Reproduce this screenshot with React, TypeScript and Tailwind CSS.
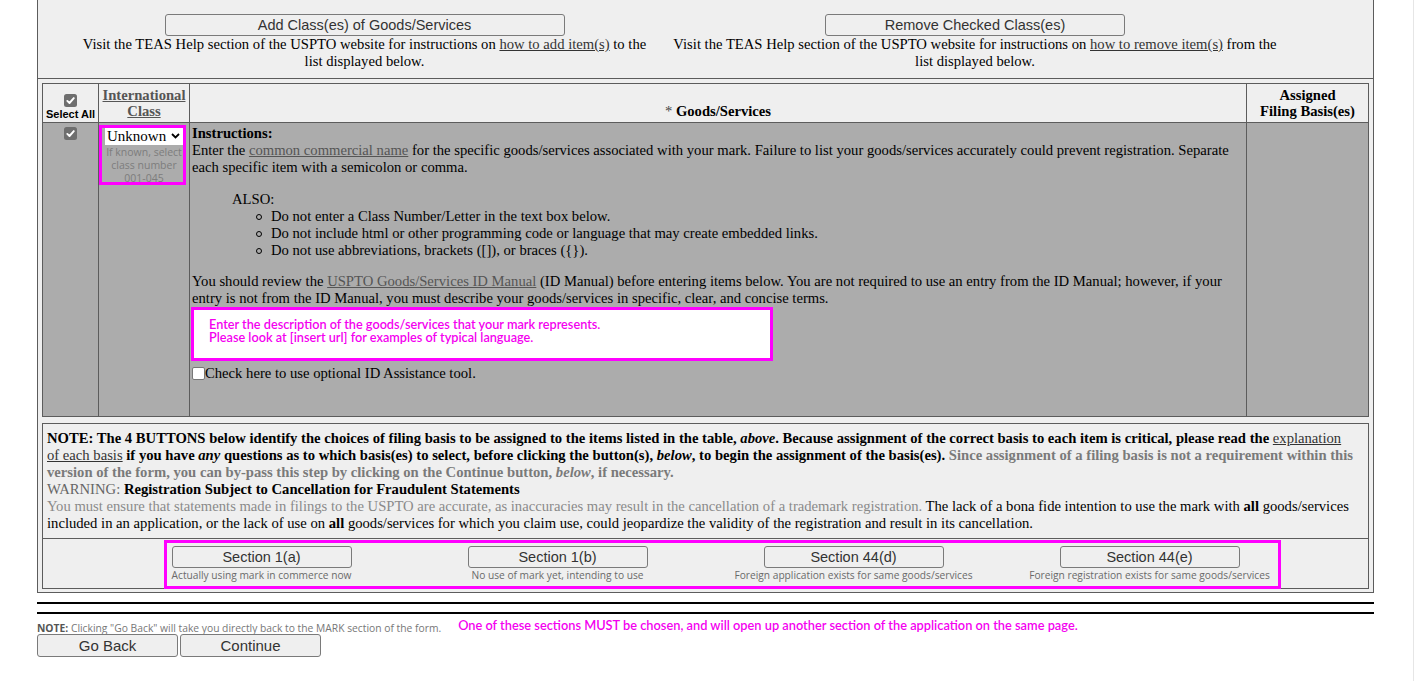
import React from "react";

function DarkCheck() {
  return (
    <svg width="13" height="13" viewBox="0 0 13 13" className="block">
      <rect x="0" y="0" width="13" height="13" rx="2.5" fill="#6e6e6e" />
      <path d="M3.3 6.9 L5.5 9 L9.8 4.1" stroke="#fff" strokeWidth="1.9" fill="none" strokeLinecap="round" strokeLinejoin="round" />
    </svg>
  );
}

function Btn({ className = "", children }: { className?: string; children: React.ReactNode }) {
  return (
    <button
      className={
        "flex items-center justify-center bg-[#efefef] border border-[#7a7a7a] rounded-[3px] text-[#333] font-['Liberation_Sans',Arial,sans-serif] text-[14.5px] leading-none " +
        className
      }
    >
      {children}
    </button>
  );
}

function Circle() {
  return <span className="inline-block w-[6px] h-[6px] rounded-full border border-black mr-[9px] shrink-0" />;
}

const sections = [
  { t: "Section 1(a)", d: "Actually using mark in commerce now" },
  { t: "Section 1(b)", d: "No use of mark yet, intending to use" },
  { t: "Section 44(d)", d: "Foreign application exists for same goods/services" },
  { t: "Section 44(e)", d: "Foreign registration exists for same goods/services" },
];

export default function App() {
  return (
    <div className="relative w-[1414px] h-[681px] overflow-hidden bg-white border-r border-[#e6e6e6] font-['Liberation_Serif','Times_New_Roman',serif] text-[14.65px] leading-[17px] text-black">
      <div className="ml-[37px] w-[1337px] bg-[#efefef] border-x border-b border-[#5c5c5c] pb-[3px]">
        {/* top section */}
        <div className="h-[79px] border-b border-[#5c5c5c] flex pt-[14px] pl-[41px] gap-[19px]">
          <div className="w-[571px] flex flex-col items-center text-center">
            <Btn className="w-[400px] h-[22px]">Add Class(es) of Goods/Services</Btn>
            <p>
              Visit the TEAS Help section of the USPTO website for instructions on{" "}
              <a className="underline text-[#333]">how to add item(s)</a> to the list displayed below.
            </p>
          </div>
          <div className="w-[612px] flex flex-col items-center text-center">
            <Btn className="w-[300px] h-[22px]">Remove Checked Class(es)</Btn>
            <p>
              Visit the TEAS Help section of the USPTO website for instructions on{" "}
              <a className="underline text-[#333]">how to remove item(s)</a> from the list displayed below.
            </p>
          </div>
        </div>

        {/* goods table */}
        <div className="mx-[4px] mt-[4px] border border-[#5c5c5c]">
          <div className="flex h-[39px] border-b border-[#5c5c5c]">
            <div className="w-[56px] border-r border-[#5c5c5c] flex flex-col items-center justify-end pb-[1px]">
              <DarkCheck />
              <span className="mt-[1px] font-['Liberation_Sans',Arial,sans-serif] font-bold text-[11px] leading-[13px]">Select All</span>
            </div>
            <div className="w-[91px] border-r border-[#5c5c5c] flex flex-col items-center justify-end pb-[3px] text-center leading-[16px] font-bold">
              <a className="underline text-[#555]">International</a>
              <a className="underline text-[#555]">Class</a>
            </div>
            <div className="w-[1057px] border-r border-[#5c5c5c] flex items-end justify-center pb-[3px] leading-[16px]">
              <span>
                <span className="text-[#444]">* </span>
                <b>Goods/Services</b>
              </span>
            </div>
            <div className="flex-1 flex flex-col items-center justify-end pb-[3px] text-center leading-[16px] font-bold">
              <span>Assigned</span>
              <span>Filing Basis(es)</span>
            </div>
          </div>
          <div className="flex h-[293px] bg-[#acacac]">
            <div className="w-[56px] border-r border-[#5c5c5c] flex justify-center pt-[4px]">
              <DarkCheck />
            </div>
            <div className="relative w-[91px] border-r border-[#5c5c5c] pt-[4px]">
              <div className="ml-[6px] w-[78px] h-[18px] bg-white flex items-center justify-between pl-[2px] pr-[3px] text-[15px]">
                <span>Unknown</span>
                <svg width="9" height="6" viewBox="0 0 9 6">
                  <path d="M1 1 L4.5 4.5 L8 1" stroke="#000" strokeWidth="1.8" fill="none" />
                </svg>
              </div>
              <div className="mt-[1px] text-center text-[#7d7d7d] font-['Open_Sans',sans-serif] text-[10.5px] leading-[13px]">
                If known, select
                <br />
                class number
                <br />
                001-045
              </div>
              <div className="absolute left-0 top-[2px] w-[87px] h-[60px] border-[3px] border-[#ff00ff]" />
            </div>
            <div className="w-[1057px] border-r border-[#5c5c5c] pl-[2px] pr-[3px] pt-[2px]">
              <b>Instructions:</b>
              <p>
                Enter the <a className="underline text-[#555]">common commercial name</a> for the specific goods/services
                associated with your mark. Failure to list your goods/services accurately could prevent registration.
                Separate each specific item with a semicolon or comma.
              </p>
              <p className="mt-[15px] pl-[40px]">ALSO:</p>
              <div className="flex items-center pl-[64px]">
                <Circle />
                Do not enter a Class Number/Letter in the text box below.
              </div>
              <div className="flex items-center pl-[64px]">
                <Circle />
                Do not include html or other programming code or language that may create embedded links.
              </div>
              <div className="flex items-center pl-[64px]">
                <Circle />
                Do not use abbreviations, brackets ([]), or braces ({"{}"}).
              </div>
              <p className="mt-[14px]">
                You should review the <a className="underline text-[#555]">USPTO Goods/Services ID Manual</a> (ID Manual)
                before entering items below. You are not required to use an entry from the ID Manual; however, if your
                entry is not from the ID Manual, you must describe your goods/services in specific, clear, and concise
                terms.
              </p>
              <div className="ml-[-1px] w-[582px] h-[54px] bg-white border-[3px] border-[#ff00ff] pl-[15px] pt-[8px] font-['Lato','Open_Sans',sans-serif] font-semibold text-[12.7px] leading-[13px] text-[#f400f0]">
                Enter the description of the goods/services that your mark represents.
                <br />
                Please look at [insert url] for examples of typical language.
              </div>
              <div className="mt-[4px] flex items-center">
                <span className="inline-block w-[13px] h-[13px] bg-white border border-[#777] rounded-[2px]" />
                <span>Check here to use optional ID Assistance tool.</span>
              </div>
            </div>
            <div className="flex-1" />
          </div>
        </div>

        {/* note table */}
        <div className="mx-[4px] mt-[6px] border border-[#5c5c5c]">
          <div className="h-[115px] border-b border-[#5c5c5c] pl-[4px] pr-[12px] pt-[6px]">
            <b>
              NOTE: The 4 BUTTONS below identify the choices of filing basis to be assigned to the items listed in the
              table, <i>above</i>. Because assignment of the correct basis to each item is critical, please read the{" "}
            </b>
            <a className="underline text-[#333]">explanation of each basis</a>
            <b>
              {" "}if you have <i>any</i> questions as to which basis(es) to select, before clicking the button(s),{" "}
              <i>below</i>, to begin the assignment of the basis(es).
            </b>{" "}
            <b className="text-[#7a7a7a]">
              Since assignment of a filing basis is not a requirement within this version of the form, you can by-pass
              this step by clicking on the Continue button, <i>below</i>, if necessary.
            </b>
            <br />
            <span className="text-[#666]">WARNING:</span> <b>Registration Subject to Cancellation for Fraudulent Statements</b>
            <br />
            <span className="text-[#8a8a8a]">
              You must ensure that statements made in filings to the USPTO are accurate, as inaccuracies may result in the
              cancellation of a trademark registration.
            </span>{" "}
            The lack of a bona fide intention to use the mark with <b>all</b> goods/services included in an application,
            or the lack of use on <b>all</b> goods/services for which you claim use, could jeopardize the validity of the
            registration and result in its cancellation.
          </div>
          <div className="relative h-[49px] flex justify-center">
            {sections.map((s) => (
              <div key={s.t} className="w-[296px] flex flex-col items-center pt-[7px]">
                <Btn className="w-[180px] h-[22px]">{s.t}</Btn>
                <span className="mt-[1px] text-[#6a6a6a] font-['Open_Sans',sans-serif] text-[10.2px] leading-[13px] whitespace-nowrap">
                  {s.d}
                </span>
              </div>
            ))}
            <div className="absolute left-[121px] top-[1px] w-[1117px] h-[49px] border-[3px] border-[#ff00ff]" />
          </div>
        </div>
      </div>

      {/* double rule */}
      <div className="ml-[37px] w-[1337px] mt-[9px] h-[2px] bg-black" />
      <div className="ml-[37px] w-[1337px] mt-[8px] h-[2px] bg-black" />

      <div className="ml-[37px] mt-[4px] flex items-start">
        <span className="mt-[4px] text-[#777] font-['Open_Sans',sans-serif] text-[10.3px] leading-[13px] whitespace-nowrap">
          <b className="text-[#555]">NOTE:</b> Clicking "Go Back" will take you directly back to the MARK section of the form.
        </span>
        <span className="ml-[17px] text-[#f400f0] font-['Lato','Open_Sans',sans-serif] font-semibold text-[12.8px] leading-[15px] whitespace-nowrap">
          One of these sections MUST be chosen, and will open up another section of the application on the same page.
        </span>
      </div>
      <div className="ml-[37px] mt-[-1px] flex gap-[2px]">
        <Btn className="w-[141px] h-[23px] text-[15px]">Go Back</Btn>
        <Btn className="w-[141px] h-[23px] text-[15px]">Continue</Btn>
      </div>
    </div>
  );
}
